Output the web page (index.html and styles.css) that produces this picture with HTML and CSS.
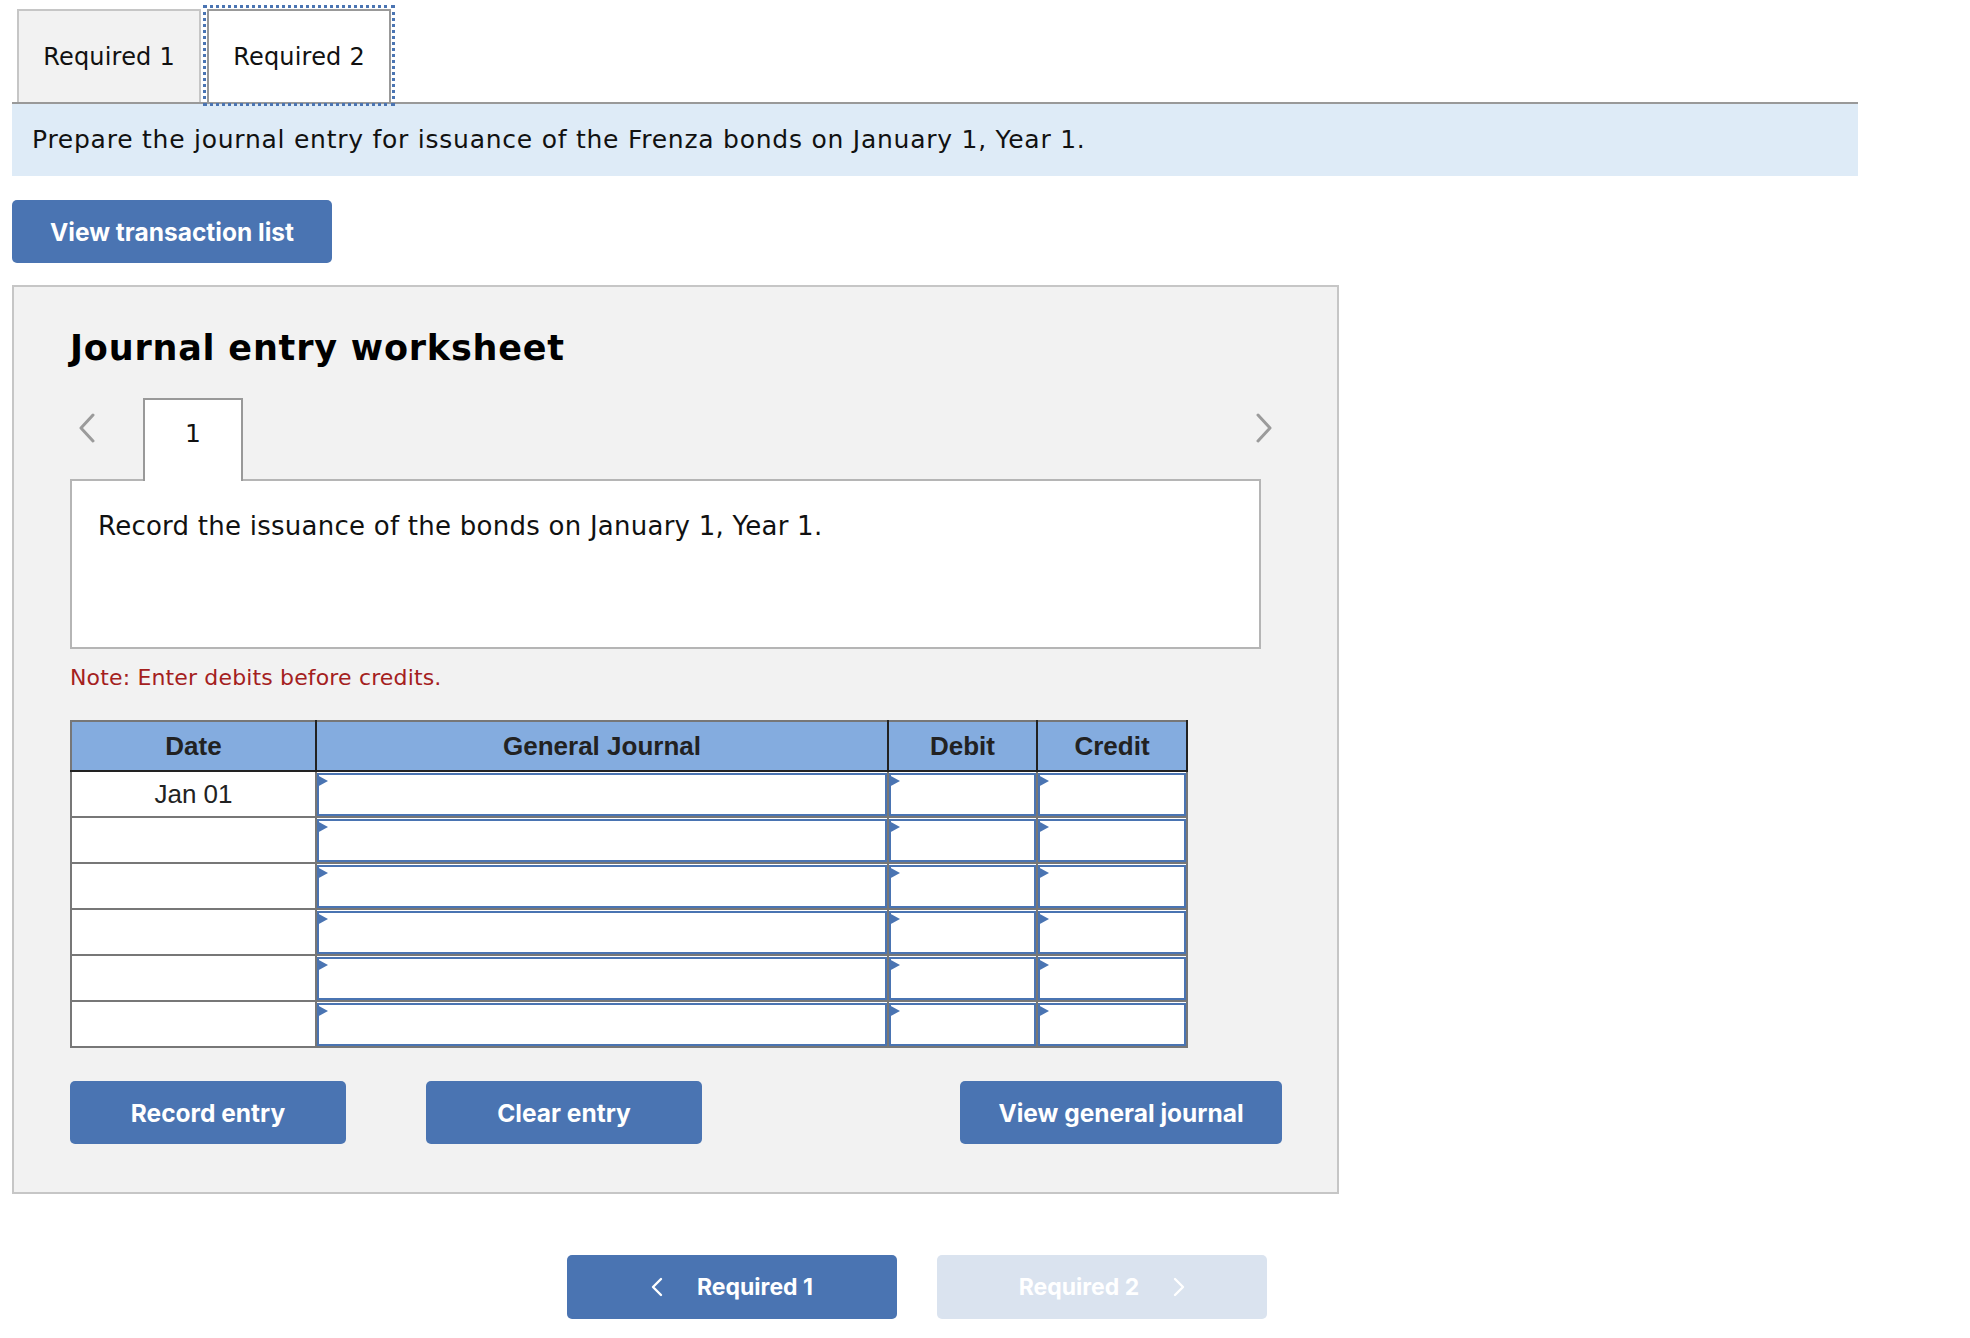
FILE: index.html
```html
<!DOCTYPE html>
<html lang="en">
<head>
    <meta charset="UTF-8">
    <title>Journal entry worksheet</title>
    <link rel="stylesheet" href="styles.css">
</head>
<body>
    <nav class="req-tabs">
        <button class="req-tab">Required 1</button>
        <button class="req-tab active">Required 2</button>
    </nav>

    <div class="instruction">Prepare the journal entry for issuance of the Frenza bonds on January 1, Year 1.</div>

    <button class="btn btn-list">View transaction list</button>

    <section class="worksheet">
        <h2 class="ws-title">Journal entry worksheet</h2>

        <div class="ws-tabs">
            <span class="ws-arrow">
                <svg width="17" height="30" viewBox="0 0 17 30"><polyline points="15,2 3,15 15,28" fill="none" stroke="#9b9b9b" stroke-width="3" stroke-linecap="round" stroke-linejoin="round"/></svg>
            </span>
            <div class="ws-tab">1</div>
            <span class="ws-arrow ws-arrow-next">
                <svg width="17" height="30" viewBox="0 0 17 30"><polyline points="2,2 14,15 2,28" fill="none" stroke="#9b9b9b" stroke-width="3" stroke-linecap="round" stroke-linejoin="round"/></svg>
            </span>
        </div>

        <div class="ws-prompt">Record the issuance of the bonds on January 1, Year 1.</div>

        <p class="ws-note">Note: Enter debits before credits.</p>

        <table class="je-table">
            <colgroup>
                <col class="col-date">
                <col class="col-journal">
                <col class="col-debit">
                <col class="col-credit">
            </colgroup>
            <thead>
                <tr>
                    <th>Date</th>
                    <th>General Journal</th>
                    <th>Debit</th>
                    <th>Credit</th>
                </tr>
            </thead>
            <tbody>
                <tr>
                    <td class="date-cell">Jan 01</td>
                    <td><div class="entry"></div></td>
                    <td><div class="entry"></div></td>
                    <td><div class="entry"></div></td>
                </tr>
                <tr>
                    <td class="date-cell"></td>
                    <td><div class="entry"></div></td>
                    <td><div class="entry"></div></td>
                    <td><div class="entry"></div></td>
                </tr>
                <tr>
                    <td class="date-cell"></td>
                    <td><div class="entry"></div></td>
                    <td><div class="entry"></div></td>
                    <td><div class="entry"></div></td>
                </tr>
                <tr>
                    <td class="date-cell"></td>
                    <td><div class="entry"></div></td>
                    <td><div class="entry"></div></td>
                    <td><div class="entry"></div></td>
                </tr>
                <tr>
                    <td class="date-cell"></td>
                    <td><div class="entry"></div></td>
                    <td><div class="entry"></div></td>
                    <td><div class="entry"></div></td>
                </tr>
                <tr>
                    <td class="date-cell"></td>
                    <td><div class="entry"></div></td>
                    <td><div class="entry"></div></td>
                    <td><div class="entry"></div></td>
                </tr>
            </tbody>
        </table>

        <div class="ws-actions">
            <button class="btn btn-record">Record entry</button>
            <button class="btn btn-clear">Clear entry</button>
            <button class="btn btn-journal">View general journal</button>
        </div>
    </section>

    <div class="req-nav">
        <button class="btn btn-nav">
            <svg width="12" height="20" viewBox="0 0 12 20"><polyline points="10,2 2,10 10,18" fill="none" stroke="#fff" stroke-width="2.4" stroke-linecap="round" stroke-linejoin="round"/></svg>
            <span>Required 1</span>
        </button>
        <button class="btn btn-nav disabled">
            <span>Required 2</span>
            <svg width="12" height="20" viewBox="0 0 12 20"><polyline points="2,2 10,10 2,18" fill="none" stroke="#fff" stroke-width="2.4" stroke-linecap="round" stroke-linejoin="round"/></svg>
        </button>
    </div>
</body>
</html>
```

FILE: styles.css
```css
* {
    margin: 0;
    padding: 0;
    box-sizing: border-box;
}

body {
    font-family: 'DejaVu Sans', Verdana, sans-serif;
    background-color: #fff;
    color: #111;
}

/* 上部タブ */
.req-tabs {
    display: flex;
    gap: 6px;
    width: 1846px;
    margin-left: 12px;
    padding: 9px 0 0 5px;
    border-bottom: 2px solid #999;
}

.req-tab {
    width: 184px;
    height: 93px;
    border: 2px solid #c6c6c6;
    border-bottom: none;
    background: #f2f2f2;
    font-family: 'DejaVu Sans', Verdana, sans-serif;
    font-size: 24px;
    letter-spacing: 0.2px;
    color: #111;
}

.req-tab.active {
    background: #fff;
    border-color: #999;
    outline: 3px dotted #4a74b2;
    outline-offset: 1px;
}

.instruction {
    width: 1846px;
    height: 72px;
    margin-left: 12px;
    padding-left: 20px;
    background: #deebf7;
    font-size: 25px;
    letter-spacing: 0.75px;
    line-height: 72px;
}

/* ボタン */
.btn {
    display: flex;
    align-items: center;
    justify-content: center;
    height: 63px;
    border: none;
    border-radius: 5px;
    background: #4a74b2;
    color: #fff;
    font-family: Inter, 'Liberation Sans', sans-serif;
    font-weight: 700;
    font-size: 24.5px;
    cursor: pointer;
}

.btn-list {
    width: 320px;
    margin: 24px 0 0 12px;
}

/* ワークシート */
.worksheet {
    width: 1327px;
    margin: 22px 0 0 12px;
    padding: 41px 0 48px 56px;
    background: #f2f2f2;
    border: 2px solid #c6c6c6;
}

.ws-title {
    font-size: 35px;
    font-weight: 700;
    letter-spacing: 0.8px;
    line-height: 40px;
    color: #000;
}

.ws-tabs {
    display: flex;
    width: 1210px;
    margin-top: 30px;
}

.ws-arrow {
    width: 73px;
    padding: 15px 0 0 8px;
}

.ws-arrow-next {
    width: auto;
    margin-left: auto;
    padding: 15px 7px 0 0;
}

.ws-tab {
    position: relative;
    z-index: 1;
    width: 100px;
    height: 83px;
    margin-bottom: -2px;
    padding-top: 20px;
    border: 2px solid #999;
    border-bottom: none;
    background: #fff;
    text-align: center;
    font-size: 25px;
    line-height: 28px;
}

.ws-prompt {
    width: 1191px;
    height: 170px;
    padding: 30px 0 0 26px;
    background: #fff;
    border: 2px solid #b5b5b5;
    font-size: 26px;
    letter-spacing: 0.25px;
    line-height: 30px;
}

.ws-note {
    margin-top: 16px;
    color: #a4201d;
    font-size: 22px;
    letter-spacing: 0.15px;
    line-height: 26px;
}

/* 仕訳テーブル */
.je-table {
    width: 1116px;
    margin-top: 29px;
    border-collapse: collapse;
    border: 2px solid #777;
    table-layout: fixed;
    font-family: 'Liberation Sans', Arial, sans-serif;
    color: #222;
}

.col-date { width: 245px; }
.col-journal { width: 572px; }
.col-debit { width: 149px; }
.col-credit { width: 150px; }

.je-table th {
    height: 50px;
    padding: 0;
    background: #84acdf;
    border: 2px solid #222;
    border-top-color: #777;
    font-size: 26px;
    font-weight: 700;
}

.je-table th:first-child {
    border-left-color: #777;
}

.je-table td {
    height: 46px;
    padding: 0;
    background: #fff;
    border: 2px solid #777;
}

.date-cell {
    text-align: center;
    font-size: 26px;
}

.entry {
    position: relative;
    height: 43px;
    border: 2px solid #4a74b2;
}

.entry::before {
    content: "";
    position: absolute;
    left: -2px;
    top: 0;
    border-left: 11px solid #4a74b2;
    border-top: 6.5px solid transparent;
    border-bottom: 6.5px solid transparent;
}

.ws-actions {
    display: flex;
    gap: 80px;
    width: 1212px;
    margin-top: 33px;
}

.btn-record,
.btn-clear {
    width: 276px;
}

.btn-journal {
    width: 322px;
    margin-left: auto;
}

/* 下部ナビ */
.req-nav {
    display: flex;
    gap: 40px;
    margin: 61px 0 0 567px;
}

.btn-nav {
    width: 330px;
    height: 64px;
    gap: 34px;
    font-size: 23px;
}

.btn-nav.disabled {
    background: #dae3ef;
    cursor: default;
}
```
